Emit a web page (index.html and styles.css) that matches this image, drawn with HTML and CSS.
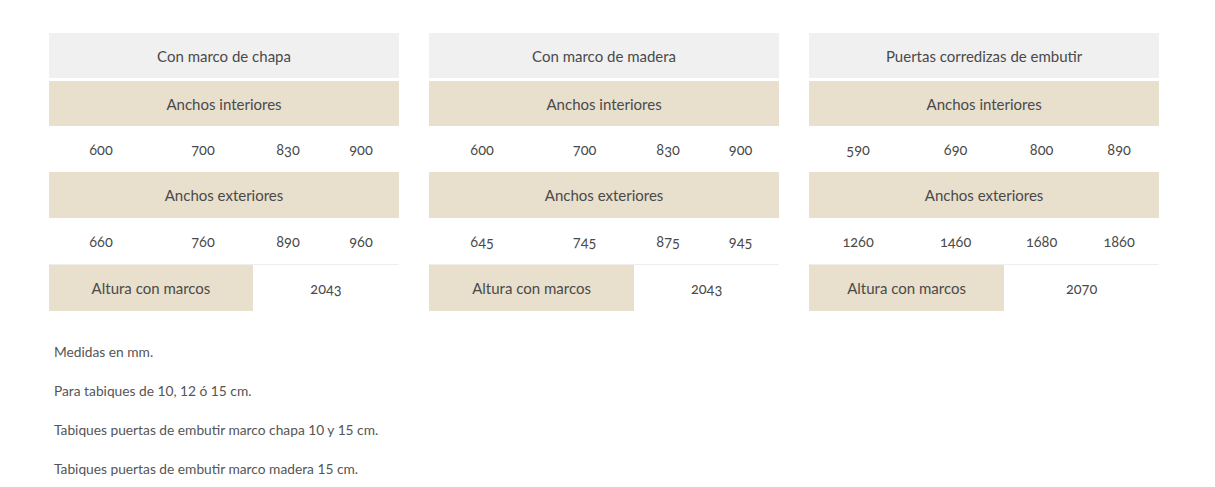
FILE: index.html
```html
<!DOCTYPE html>
<html lang="es">
<head>
<meta charset="utf-8">
<title>Medidas</title>
<link rel="stylesheet" href="styles.css">
</head>
<body>
<div class="page">
  <div class="tables">
    <table class="spec t1">
      <colgroup><col class="c1"><col class="c2"><col class="c3"><col class="c4"></colgroup>
      <tr class="head"><th colspan="4">Con marco de chapa</th></tr>
      <tr class="band"><td colspan="4">Anchos interiores</td></tr>
      <tr class="nums"><td>600</td><td>700</td><td>830</td><td>900</td></tr>
      <tr class="band"><td colspan="4">Anchos exteriores</td></tr>
      <tr class="nums last"><td>660</td><td>760</td><td>890</td><td>960</td></tr>
      <tr class="alt"><td colspan="2" class="lab">Altura con marcos</td><td colspan="2">2043</td></tr>
    </table>
    <table class="spec t2">
      <colgroup><col class="c1"><col class="c2"><col class="c3"><col class="c4"></colgroup>
      <tr class="head"><th colspan="4">Con marco de madera</th></tr>
      <tr class="band"><td colspan="4">Anchos interiores</td></tr>
      <tr class="nums"><td>600</td><td>700</td><td>830</td><td>900</td></tr>
      <tr class="band"><td colspan="4">Anchos exteriores</td></tr>
      <tr class="nums last"><td>645</td><td>745</td><td>875</td><td>945</td></tr>
      <tr class="alt"><td colspan="2" class="lab">Altura con marcos</td><td colspan="2">2043</td></tr>
    </table>
    <table class="spec t3">
      <colgroup><col class="c1"><col class="c2"><col class="c3"><col class="c4"></colgroup>
      <tr class="head"><th colspan="4">Puertas corredizas de embutir</th></tr>
      <tr class="band"><td colspan="4">Anchos interiores</td></tr>
      <tr class="nums"><td>590</td><td>690</td><td>800</td><td>890</td></tr>
      <tr class="band"><td colspan="4">Anchos exteriores</td></tr>
      <tr class="nums last"><td>1260</td><td>1460</td><td>1680</td><td>1860</td></tr>
      <tr class="alt"><td colspan="2" class="lab">Altura con marcos</td><td colspan="2">2070</td></tr>
    </table>
  </div>
  <div class="notes">
    <p>Medidas en mm.</p>
    <p>Para tabiques de 10, 12 ó 15 cm.</p>
    <p>Tabiques puertas de embutir marco chapa 10 y 15 cm.</p>
    <p>Tabiques puertas de embutir marco madera 15 cm.</p>
  </div>
</div>
</body>
</html>
```

FILE: styles.css
```css
html, body {
  margin: 0;
  padding: 0;
  background: #fff;
}
.page {
  padding: 33px 0 0 49px;
  font-family: Lato, "Liberation Sans", sans-serif;
  color: #444;
}
.tables {
  display: flex;
  gap: 30px;
}
.spec {
  width: 350px;
  border-collapse: collapse;
  table-layout: fixed;
  font-size: 15px;
  color: #4a4a4a;
  font-variant-numeric: oldstyle-nums;
}
.spec th, .spec td {
  padding: 0;
  text-align: center;
  font-weight: 400;
}
.head th {
  height: 45px;
  background: #f0f0f0;
  border-bottom: 3px solid #fff;
}
.band td {
  height: 45px;
  background: #e8dfcc;
}
.nums td {
  height: 46px;
  font-size: 14.5px;
}
.nums.last td {
  border-bottom: 1px solid #eeeeee;
}
.band + .nums + .band td {
  height: 46px;
}
.alt td {
  height: 46px;
  font-size: 14.5px;
}
.alt td.lab {
  background: #e8dfcc;
  font-size: 15px;
}
.t1 .c1 { width: 104px; }
.t1 .c2 { width: 100px; }
.t1 .c3 { width: 70px; }
.t1 .c4 { width: 76px; }
.t2 .c1 { width: 106px; }
.t2 .c2 { width: 99px; }
.t2 .c3 { width: 68px; }
.t2 .c4 { width: 77px; }
.t3 .c1 { width: 98px; }
.t3 .c2 { width: 97px; }
.t3 .c3 { width: 75px; }
.t3 .c4 { width: 80px; }
.notes {
  padding: 31px 0 0 5px;
  font-size: 13.75px;
  color: #555;
}
.notes p {
  margin: 0 0 20px;
  line-height: 19px;
}
```
